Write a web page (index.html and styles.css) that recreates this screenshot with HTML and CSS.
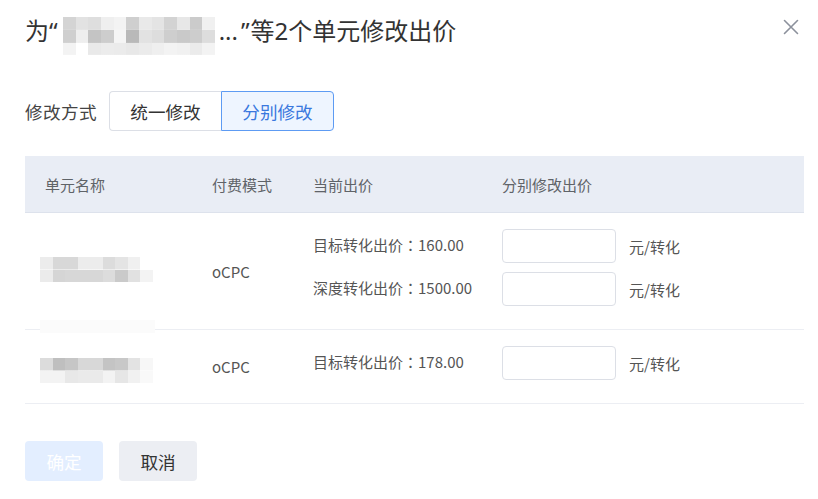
FILE: index.html
```html
<!DOCTYPE html>
<html lang="zh-CN">
<head>
<meta charset="utf-8">
<title>修改出价</title>
<link rel="stylesheet" href="styles.css">
</head>
<body>
<div class="dialog">
  <div class="head">
    <div class="title">
      <span class="t-text">为“</span>
      <div class="blur-title"></div>
      <span class="t-text">...<span class="q">”</span>等2个单元修改出价</span>
    </div>
    <button class="close" aria-label="关闭">
      <svg width="16" height="16" viewBox="0 0 16 16"><path d="M1.5 1.5 L14.5 14.5 M14.5 1.5 L1.5 14.5" stroke="#8c919c" stroke-width="1.6" fill="none" stroke-linecap="round"/></svg>
    </button>
  </div>

  <div class="mode">
    <span class="mode-label">修改方式</span>
    <div class="seg">
      <button class="seg-btn">统一修改</button>
      <button class="seg-btn active">分别修改</button>
    </div>
  </div>

  <div class="table">
    <div class="tr th">
      <div class="cell c1">单元名称</div>
      <div class="cell c2">付费模式</div>
      <div class="cell c3">当前出价</div>
      <div class="cell c4">分别修改出价</div>
    </div>
    <div class="tr">
      <div class="cell c1 mid"><div class="blur-name n1"></div></div>
      <div class="cell c2 mid">oCPC</div>
      <div class="cell c3 stack">
        <div class="line">目标转化出价<span class="colon">：</span>160.00</div>
        <div class="line">深度转化出价<span class="colon">：</span>1500.00</div>
      </div>
      <div class="cell c4 stack">
        <div class="line"><input class="inp" type="text"><span class="unit">元/转化</span></div>
        <div class="line"><input class="inp" type="text"><span class="unit">元/转化</span></div>
      </div>
    </div>
    <div class="tr">
      <div class="cell c1 mid"><div class="blur-name n2"></div></div>
      <div class="cell c2 mid">oCPC</div>
      <div class="cell c3 stack">
        <div class="line">目标转化出价<span class="colon">：</span>178.00</div>
      </div>
      <div class="cell c4 stack">
        <div class="line"><input class="inp" type="text"><span class="unit">元/转化</span></div>
      </div>
    </div>
  </div>

  <div class="foot">
    <button class="btn btn-ok">确定</button>
    <button class="btn btn-cancel">取消</button>
  </div>
</div>
</body>
</html>
```

FILE: styles.css
```css
* { box-sizing: border-box; }
html, body { margin: 0; padding: 0; background: #fff; }
body {
  font-family: "Noto Sans CJK SC", "Noto Sans", sans-serif;
  color: #333;
  width: 818px;
  height: 499px;
  overflow: hidden;
}
.dialog { padding: 14px 14px 0 25px; }

.head { display: flex; justify-content: space-between; align-items: flex-start; height: 37px; }
.title {
  display: flex; align-items: flex-start; height: 34px;
  font-family: "Noto Sans", "Noto Sans CJK SC", sans-serif;
  font-size: 24px; line-height: 34px; color: #333; white-space: nowrap;
}
.t-text { display: block; }
.q { margin-left: 3px; margin-right: 1px; }
.blur-title {
  width: 152px; height: 38px; margin-top: 3px; margin-left: 5px; margin-right: 4px;
  background:
    linear-gradient(to right, #d4d4d4 0 8.33%, #e2e2e2 8.33% 16.67%, #dedede 16.67% 25%, #efefef 25% 33.33%, #f3f3f3 33.33% 41.67%, #cfcfcf 41.67% 50%, #e9e9e9 50% 58.33%, #e4e4e4 58.33% 66.67%, #d3d3d3 66.67% 75%, #e7e7e7 75% 83.33%, #cbcbcb 83.33% 91.67%, #f0f0f0 91.67% 100%) top / 100% 34% no-repeat,
    linear-gradient(to right, #cfcfcf 0 8.33%, #eeeeee 8.33% 16.67%, #c4c4c4 16.67% 25%, #cdcdcd 25% 33.33%, #f5f5f5 33.33% 41.67%, #b9b9b9 41.67% 50%, #e2e2e2 50% 58.33%, #dddddd 58.33% 66.67%, #cecece 66.67% 75%, #c9c9c9 75% 83.33%, #cdcdcd 83.33% 91.67%, #dddddd 91.67% 100%) center / 100% 34% no-repeat,
    linear-gradient(to right, #f3f3f3 0 8.33%, #ffffff 8.33% 16.67%, #e9e9e9 16.67% 25%, #ececec 25% 33.33%, #ebebeb 33.33% 41.67%, #e8e8e8 41.67% 50%, #ebebeb 50% 58.33%, #efefef 58.33% 66.67%, #f3f3f3 66.67% 75%, #f1f1f1 75% 83.33%, #ebebeb 83.33% 91.67%, #f3f3f3 91.67% 100%) bottom / 100% 34% no-repeat;
}
.close {
  border: 0; background: none; padding: 0; margin: 5px 5px 0 0;
  width: 16px; height: 16px; display: block; cursor: pointer;
}
.close svg { display: block; }

.mode { display: flex; align-items: center; margin-top: 40px; height: 40px; }
.mode-label { font-size: 17.6px; color: #444; margin-right: 12px; letter-spacing: 0.4px; }
.seg { display: flex; }
.seg-btn {
  font-family: inherit; font-size: 17.6px; color: #333;
  height: 40px; width: 112px; padding: 0;
  background: #fff; border: 1px solid #dcdfe6; cursor: pointer;
}
.seg-btn:first-child { border-radius: 4px 0 0 4px; border-right: 0; }
.seg-btn:last-child { border-radius: 0 4px 4px 0; width: 113px; }
.seg-btn.active { color: #3a78de; background: #eef5ff; border-color: #5d9bf3; }

.table { margin-top: 25px; width: 779px; }
.tr {
  display: grid;
  grid-template-columns: 187px 101px 189px 1fr;
  border-bottom: 1px solid #eceef3;
  font-size: 15px;
  color: #555;
}
.th { height: 57px; background: #e9edf5; border-bottom-color: #dde2ec; align-items: center; color: #5f6368; }
.c1 { padding-left: 20px; }
.mid { display: flex; align-items: center; }
.stack { display: flex; flex-direction: column; gap: 9px; padding: 16px 0 23px; }
.line { height: 34px; display: flex; align-items: center; white-space: nowrap; }
.c3 .line { margin-top: -2px; margin-bottom: 2px; }
.colon { font-family: "Noto Sans CJK TC", "Noto Sans CJK SC", sans-serif; }
.inp {
  width: 114px; height: 34px; border: 1px solid #dcdfe6; border-radius: 4px;
  background: #fff; margin: 0; padding: 0 8px; font: inherit;
}
.unit { margin-left: 13px; color: #555; }

.blur-name { width: 113px; height: 25px; margin-left: -5px; position: relative; }
.n1 {
  margin-top: -3px;
  background:
    linear-gradient(to right, #ececec 0 11.11%, #d8d8d8 11.11% 33.33%, #ececec 33.33% 55.55%, #dcdcdc 55.55% 66.67%, #e4e4e4 66.67% 77.78%, #f0f0f0 77.78% 88.89%, #ffffff 88.89% 100%) top / 100% 50% no-repeat,
    linear-gradient(to right, #ebebeb 0 11.11%, #d5d5d5 11.11% 22.22%, #d7d7d7 22.22% 55.55%, #dcdcdc 55.55% 66.67%, #cacaca 66.67% 77.78%, #e1e1e1 77.78% 88.89%, #f3f3f3 88.89% 100%) bottom / 100% 50% no-repeat;
}
.n1::after {
  content: ""; position: absolute; left: 0; top: 63px; width: 115px; height: 13px; background: #fbfbfb;
}
.n2 {
  margin-top: 8px;
  background:
    linear-gradient(to right, #dcdcdc 0 11.11%, #bfbfbf 11.11% 22.22%, #c6c6c6 22.22% 33.33%, #d8d8d8 33.33% 55.55%, #c4c4c4 55.55% 66.67%, #c8c8c8 66.67% 77.78%, #e3e3e3 77.78% 88.89%, #f7f7f7 88.89% 100%) top / 100% 50% no-repeat,
    linear-gradient(to right, #f3f3f3 0 22.22%, #e8e8e8 22.22% 33.33%, #eaeaea 33.33% 55.55%, #f3f3f3 55.55% 66.67%, #e6e6e6 66.67% 77.78%, #f1f1f1 77.78% 88.89%, #f9f9f9 88.89% 100%) bottom / 100% 50% no-repeat;
}

.foot { display: flex; gap: 16px; margin-top: 37px; }
.btn {
  font-family: inherit; font-size: 17.6px; width: 78px; height: 40px;
  border: 0; border-radius: 4px; padding: 0; cursor: pointer;
}
.btn-ok { background: #e3eeff; color: #fff; }
.btn-cancel { background: #eceef3; color: #333; }
```
